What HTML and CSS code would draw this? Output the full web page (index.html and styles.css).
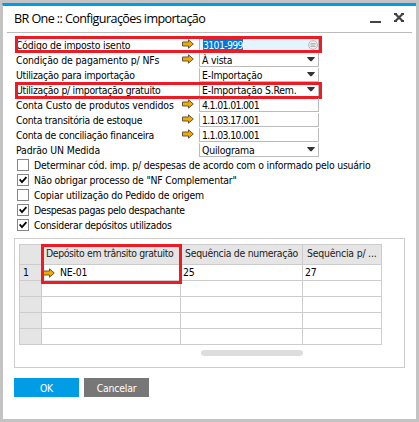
FILE: index.html
```html
<!DOCTYPE html>
<html lang="pt-BR">
<head>
<meta charset="utf-8">
<title>BR One :: Configurações importação</title>
<link rel="stylesheet" href="styles.css">
</head>
<body>
<svg width="0" height="0" class="defs">
  <symbol id="arrow" viewBox="0 0 12 10"><path d="M.5 3h6V.8L11.3 5 6.5 9.2V7h-6z" fill="#f0ab00" stroke="#66553c"/></symbol>
  <symbol id="caret" viewBox="0 0 8 5"><path d="M.3 0h7.4v.7L4.6 4.2H3.4L.3.7z" fill="#333"/></symbol>
  <symbol id="tick" viewBox="0 0 12 12"><path d="M2.7 5.4 5 8.2 9.4 3.2" fill="none" stroke="#000" stroke-width="1.8"/></symbol>
</svg>
<main class="window">
  <header class="titlebar">
    <h1>BR One :: Configurações importação</h1>
    <svg class="controls" width="34" height="14" viewBox="0 0 34 14"><path d="M0 10h11v2H0z" fill="#444"/><path d="m25.5 3 7 7m0-7-7 7" stroke="#444" stroke-width="2.2"/><path d="M24 2h3v2h-3zm7 0h3v2h-3zm-7 7h3v2h-3zm7 0h3v2h-3z" fill="#444"/></svg>
  </header>
  <section class="form">
    <div class="row marked"><label>Código de imposto isento</label><svg class="arrow"><use href="#arrow"/></svg><div class="field active code"><span class="selected">3101-999</span><svg class="list" width="10" height="10" viewBox="0 0 10 10"><circle cx="5" cy="5" r="4.4" fill="#eee" stroke="#aaa" stroke-width=".8"/><path d="M2.5 3.5h5m-5 1.5h5m-5 1.5h5" stroke="#999" stroke-width=".7"/></svg></div></div>
    <div class="row"><label class="wide">Condição de pagamento p/ NFs</label><svg class="arrow"><use href="#arrow"/></svg><div class="field"><span>À vista</span><svg class="caret"><use href="#caret"/></svg></div></div>
    <div class="row"><label class="tight">Utilização para importação</label><div class="field"><span>E-Importação</span><svg class="caret"><use href="#caret"/></svg></div></div>
    <div class="row marked lower"><label class="tight">Utilização p/ importação gratuito</label><div class="field"><span>E-Importação S.Rem.</span><svg class="caret"><use href="#caret"/></svg></div></div>
    <div class="row"><label class="wide">Conta Custo de produtos vendidos</label><svg class="arrow"><use href="#arrow"/></svg><div class="field code"><span>4.1.01.01.001</span></div></div>
    <div class="row"><label class="tight">Conta transitória de estoque</label><svg class="arrow"><use href="#arrow"/></svg><div class="field code"><span>1.1.03.17.001</span></div></div>
    <div class="row"><label class="tight">Conta de conciliação financeira</label><svg class="arrow"><use href="#arrow"/></svg><div class="field code"><span>1.1.03.10.001</span></div></div>
    <div class="row"><label class="wide">Padrão UN Medida</label><div class="field"><span>Quilograma</span><svg class="caret"><use href="#caret"/></svg></div></div>
  </section>
  <section class="checks">
    <div class="check"><i class="box"></i><span>Determinar cód. imp. p/ despesas de acordo com o informado pelo usuário</span></div>
    <div class="check"><i class="box"><svg><use href="#tick"/></svg></i><span>Não obrigar processo de "NF Complementar"</span></div>
    <div class="check"><i class="box"></i><span>Copiar utilização do Pedido de origem</span></div>
    <div class="check"><i class="box"><svg><use href="#tick"/></svg></i><span class="tighter">Despesas pagas pelo despachante</span></div>
    <div class="check"><i class="box"><svg><use href="#tick"/></svg></i><span class="tight">Considerar depósitos utilizados</span></div>
  </section>
  <section class="panel">
    <div class="grid">
      <div class="th"></div><div class="th tighter">Depósito em trânsito gratuito</div><div class="th tight">Sequência de numeração</div><div class="th">Sequência p/ ...</div>
      <div class="num">1</div><div class="link"><svg class="arrow"><use href="#arrow"/></svg><span>NE-01</span></div><div>25</div><div>27</div>
      <div class="num"></div><div></div><div></div><div></div>
      <div class="num"></div><div></div><div></div><div></div>
      <div class="num"></div><div></div><div></div><div></div>
      <div class="num"></div><div></div><div></div><div></div>
      <b class="outline"></b>
    </div>
    <div class="scroll"></div>
  </section>
  <footer class="actions"><button class="ok">OK</button><button>Cancelar</button></footer>
</main>
</body>
</html>
```
FILE: styles.css
```css
*, *::after { box-sizing: border-box; }
body { margin: 0; height: 422px; overflow: hidden; background: #c3c3c3; color: #000; font: 10.4px/15px "DejaVu Sans Condensed", "DejaVu Sans", sans-serif; font-stretch: condensed; letter-spacing: -.2px; padding: 3px 3px 3px 2px; }
.defs { position: absolute; }
.window { height: 416px; background: #fff; border-top: 3px solid #009de6; border-left: 1px solid #c3c3c3; }
.titlebar { height: 27px; margin: 0 4px; padding: 0 8px 0 7px; border-bottom: 1px solid #bbb; display: flex; justify-content: space-between; }
h1 { margin: 0; font: 12.6px/26px "Open Sans", sans-serif; letter-spacing: -.6px; white-space: nowrap; }
.controls { margin-top: 5px; }
.form { padding: 5px 0 0 13px; }
.row { height: 15px; display: flex; position: relative; white-space: nowrap; width: 303px; }
.row label { width: 166px; line-height: 14px; }
.wide { letter-spacing: -.12px; }
.tight { letter-spacing: -.28px; }
.tighter { letter-spacing: -.38px; }
.row .arrow { margin-top: 1px; }
.arrow { width: 12px; height: 10px; flex: none; }
.field { margin-left: auto; width: 120px; height: 14px; border: solid #bbb; border-width: 0 1px 1px; border-radius: 1px; padding: 0 3px 0 2px; display: flex; justify-content: space-between; line-height: 15px; }
.code { letter-spacing: -.65px; }
.active { background: #e5f5ff; padding-left: 3px; padding-right: 0; }
.selected { background: #0078d7; color: #fff; margin-top: 1px; height: 12px; line-height: 13px; }
.list { margin-top: 2px; }
.caret { width: 8px; height: 5px; margin-top: 4px; }
.marked::after { content: ""; position: absolute; left: -1px; top: -2px; width: 307px; height: 17px; border: 3px solid #ed1c24; }
.lower::after { top: -1px; }
.checks { padding: 1px 0 0 14px; }
.check { height: 15px; display: flex; gap: 5px; white-space: nowrap; }
.box { width: 12px; height: 12px; border: 1px solid #868686; background: #fff; flex: none; }
.box svg { width: 12px; height: 12px; margin: -1px; display: block; }
.check span { line-height: 12px; }
.panel { margin: 4px 0 0 11px; width: 391px; height: 130px; border: 1px solid #ccc; padding: 5px 0 0 4px; }
.grid { display: grid; grid-template-columns: 22px 139px 122px 79px; grid-template-rows: 20px repeat(5, 16px); width: 363px; height: 101px; border: solid #ccc; border-width: 1px 0 0 1px; position: relative; }
.grid > div { border: solid #ccc; border-width: 0 1px 1px 0; padding-left: 2px; white-space: nowrap; line-height: 15px; }
.grid > .th { background: #e5e5e5; padding-left: 4px; line-height: 17px; color: #222; }
.grid > .num { background: #e5e5e5; padding-left: 3px; }
.grid > .link { display: flex; gap: 5px; padding-left: 1px; }
.link .arrow { margin-top: 3px; }
.outline { position: absolute; left: 21px; top: -1px; width: 141px; height: 40px; border: 3px solid #ed1c24; }
.scroll { width: 102px; height: 6px; border-radius: 3px; background: #ddd; margin: 5px 0 0 182px; }
.actions { display: flex; gap: 5px; margin: 10px 0 0 11px; }
button { width: 65px; height: 19px; padding: 0; border: 0; background: #777; color: #fff; font: inherit; letter-spacing: inherit; line-height: 18px; }
.ok { background: #009de6; }
```
